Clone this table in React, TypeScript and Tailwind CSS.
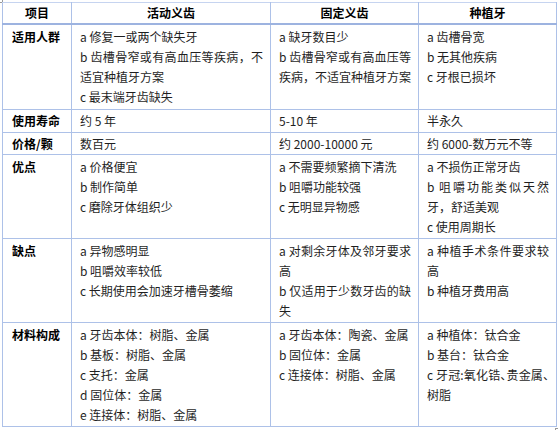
const FONT = '[font-family:"Noto_Sans_CJK_SC","Noto_Sans",sans-serif]'

type Row = {
  label: string
  cells: string[][]
  pad: string
}

const rows: Row[] = [
  {
    label: '适用人群',
    pad: 'pt-[2px] pb-[2px]',
    cells: [
      ['a 修复一或两个缺失牙', 'b 齿槽骨窄或有高血压等疾病，不适宜种植牙方案', 'c 最末端牙齿缺失'],
      ['a 缺牙数目少', 'b 齿槽骨窄或有高血压等疾病，不适宜种植牙方案'],
      ['a 齿槽骨宽', 'b 无其他疾病', 'c 牙根已损坏'],
    ],
  },
  {
    label: '使用寿命',
    pad: 'pt-[1px] pb-[1px]',
    cells: [['约 5 年'], ['5-10 年'], ['半永久']],
  },
  {
    label: '价格/颗',
    pad: 'pt-[1px] pb-0',
    cells: [['数百元'], ['约 2000-10000 元'], ['约 6000-数万元不等']],
  },
  {
    label: '优点',
    pad: 'pt-[2px] pb-[1px]',
    cells: [
      ['a 价格便宜', 'b 制作简单', 'c 磨除牙体组织少'],
      ['a 不需要频繁摘下清洗', 'b 咀嚼功能较强', 'c 无明显异物感'],
      ['a 不损伤正常牙齿', 'b 咀嚼功能类似天然牙，舒适美观', 'c 使用周期长'],
    ],
  },
  {
    label: '缺点',
    pad: 'pt-[2px] pb-[1px]',
    cells: [
      ['a 异物感明显', 'b 咀嚼效率较低', 'c 长期使用会加速牙槽骨萎缩'],
      ['a 对剩余牙体及邻牙要求高', 'b 仅适用于少数牙齿的缺失'],
      ['a 种植手术条件要求较高', 'b 种植牙费用高'],
    ],
  },
  {
    label: '材料构成',
    pad: 'pt-[2px] pb-[1px]',
    cells: [
      ['a 牙齿本体：树脂、金属', 'b 基板：树脂、金属', 'c 支托：金属', 'd 固位体：金属', 'e 连接体：树脂、金属'],
      ['a 牙齿本体：陶瓷、金属', 'b 固位体：金属', 'c 连接体：树脂、金属'],
      ['a 种植体：钛合金', 'b 基台：钛合金', 'c 牙冠:氧化锆、贵金属、树脂'],
    ],
  },
]

const headers = ['项目', '活动义齿', '固定义齿', '种植牙']

export default function App() {
  return (
    <div className={`relative w-[558px] h-[430px] bg-white text-[#1f1f1f] ${FONT}`}>
      {/* little corner handles */}
      <div className="absolute left-0 top-0 w-[3px] h-[3px] border-r border-b border-[#9a9a9a]" />
      <div className="absolute left-[555px] top-[428px] w-[3px] h-[2px] border-l border-t border-[#9a9a9a]" />

      <table className="absolute left-[2px] top-[2px] w-[554px] table-fixed border-collapse text-[12px] leading-[20px]">
        <colgroup>
          <col className="w-[69px]" />
          <col className="w-[199px]" />
          <col className="w-[148px]" />
          <col className="w-[138px]" />
        </colgroup>
        <thead>
          <tr>
            {headers.map((h) => (
              <th
                key={h}
                className="border border-t-[#c6d4f0] border-x-[#adc1e8] border-b-2 border-b-[#9db3e0] py-0 text-center font-bold text-black"
              >
                {h}
              </th>
            ))}
          </tr>
        </thead>
        <tbody>
          {rows.map((row) => (
            <tr key={row.label}>
              <td className={`border border-[#adc1e8] align-top pl-[9px] pr-[6px] font-bold text-black ${row.pad}`}>
                {row.label}
              </td>
              {row.cells.map((items, i) => (
                <td key={i} className={`border border-[#adc1e8] align-top pl-[8px] pr-[7px] ${row.pad}`}>
                  {items.map((t) => (
                    <p
                      key={t}
                      className={t.includes('牙冠') ? "text-justify [font-feature-settings:'halt']" : 'text-justify'}
                    >
                      {t}
                    </p>
                  ))}
                </td>
              ))}
            </tr>
          ))}
        </tbody>
      </table>
    </div>
  )
}
